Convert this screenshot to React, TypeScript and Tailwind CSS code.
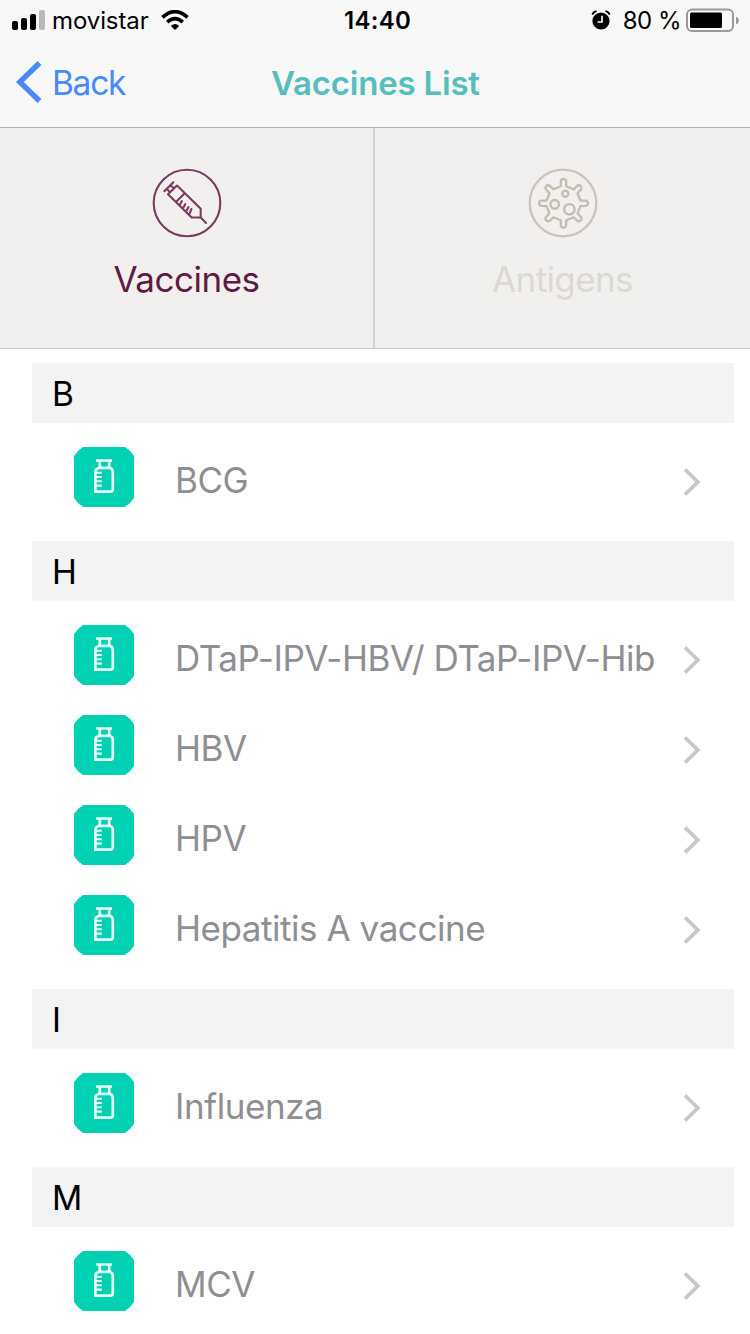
import React, { useState } from 'react';

interface Section {
  letter: string;
  items: string[];
}

const sections: Section[] = [
  { letter: 'B', items: ['BCG'] },
  { letter: 'H', items: ['DTaP-IPV-HBV/ DTaP-IPV-Hib', 'HBV', 'HPV', 'Hepatitis A vaccine'] },
  { letter: 'I', items: ['Influenza'] },
  { letter: 'M', items: ['MCV'] },
];

// Outline of the germ: eight rounded spikes around a round body
const germPath = () => {
  const point = (angle: number, along: number, side: number) => {
    const x = 35.5 + along * Math.cos(angle) - side * Math.sin(angle);
    const y = 35.3 + along * Math.sin(angle) + side * Math.cos(angle);
    return `${x.toFixed(2)} ${y.toFixed(2)}`;
  };
  let d = '';
  for (let i = 0; i < 8; i++) {
    const a = (i * Math.PI) / 4;
    d += `${i === 0 ? 'M' : 'L'}${point(a, 17, -2.8)} L${point(a, 22.4, -2.6)} `;
    d += `A2.7 2.7 0 0 1 ${point(a, 22.4, 2.6)} L${point(a, 17, 2.8)} `;
  }
  return d + 'Z';
};

const SyringeIcon = () => (
  <svg width="70" height="70" viewBox="0 0 70 70" fill="none" stroke="#7a3a61" strokeWidth="2.1" strokeLinecap="round" strokeLinejoin="round">
    <circle cx="35" cy="35" r="33.3" />
    <path d="M12.3 23.2 21.3 14.2M14.6 21 18 24M18.4 17.2 22 20.2" />
    <path d="M16 26.3 25 17.6 48.7 40.7V49.5H39.7ZM32 26 24.7 33.2M48.7 49.5 54 55" />
    <path d="M28 36.6 29.8 33.2M31.4 39.6 33.2 36.2M34.6 42.6 36.4 39.2M37.6 45.6 39.4 41" />
  </svg>
);

const GermIcon = () => (
  <svg width="70" height="70" viewBox="0 0 70 70" fill="none" stroke="#c4bbae" strokeWidth="2.3" strokeLinejoin="round">
    <circle cx="35" cy="35" r="33.3" stroke="#cbc3b8" />
    <path d={germPath()} />
    <circle cx="37.4" cy="25.7" r="3" />
    <circle cx="26.7" cy="36.3" r="4.3" />
    <circle cx="41.4" cy="41.3" r="5.2" />
  </svg>
);

const VialIcon = () => (
  <svg width="60" height="60" viewBox="0 0 60 60" fill="none" stroke="#e6fbf6" strokeWidth="2.7">
    <path d="M9 0H51Q56 3 60 9V51Q57 56 51 60H9Q3 56 0 51V9Q3 4 9 0Z" fill="#00d1b2" stroke="none" />
    <path d="M22 13.5H38M25.8 13.5V20.5M35.2 13.5V20.5M24 20.8H37" />
    <path d="M24 21.2Q21.4 22 21.4 25V44.6H36.5Q38.8 44.6 38.8 42.3V25Q38.8 22 36.5 21.2" />
    <path d="M21 25.8H27.8M21 30H27.8M21 34.3H27.8M21 38.6H27.8" strokeWidth="2.1" />
  </svg>
);

const StatusBar = () => (
  <div className="relative flex h-10 items-center justify-between pl-3 pr-[11px] text-black">
    <div className="flex items-center">
      <svg width="34" height="20" viewBox="0 0 34 20">
        <rect x="0" y="11" width="6" height="9" rx="2" />
        <rect x="9" y="8" width="6" height="12" rx="2" />
        <rect x="18" y="4" width="6" height="16" rx="2" />
        <rect x="27" y="0" width="6" height="20" rx="2" fill="#b9b9b9" />
      </svg>
      <span className="ml-[6px] pt-[2px] text-[24px] tracking-[-0.1px]">movistar</span>
      <svg className="ml-3" width="28" height="20" viewBox="0 0 28 20">
        <path d="M1.5 7.4Q14-4.2 26.5 7.4" fill="none" stroke="black" strokeWidth="3.6" />
        <path d="M6.2 12.2Q14 5.2 21.8 12.2" fill="none" stroke="black" strokeWidth="3.6" />
        <path d="M9.8 16Q14 12 18.2 16L14 20Z" />
      </svg>
    </div>
    <span className="absolute left-[344px] pt-[2px] text-[24px] font-semibold tracking-[0.3px]">14:40</span>
    <div className="flex items-center">
      <svg width="20" height="20" viewBox="0 0 20 20">
        <circle cx="10" cy="11" r="8.6" />
        <path d="M1.3 4.6Q2.5 1.6 5.6 1.2M18.7 4.6Q17.5 1.6 14.4 1.2" fill="none" stroke="black" strokeWidth="1.8" />
        <path d="M11 5.8V12H6.5" fill="none" stroke="#f8f8f8" strokeWidth="1.7" />
      </svg>
      <span className="ml-[12px] pt-[2px] text-[24px] tracking-[-0.5px]">80 %</span>
      <svg className="ml-[5px]" width="53" height="24" viewBox="0 0 53 24">
        <rect x="1" y="1.5" width="46" height="21.5" rx="5" fill="none" stroke="#999" strokeWidth="2" />
        <rect x="4" y="4.5" width="32" height="15.5" rx="1.5" />
        <path d="M50 8.5Q53 10 53 12.5T50 16.5Z" fill="#999" />
      </svg>
    </div>
  </div>
);

const App: React.FC = () => {
  const [tab, setTab] = useState('vaccines');

  return (
    <div className="flex h-[1334px] w-[750px] flex-col overflow-hidden bg-white font-['Inter',sans-serif]">
      <header className="h-32 shrink-0 border-b border-[#b2b2b2] bg-[#f8f8f8]">
        <StatusBar />
        <div className="relative flex h-[87px] items-center">
          <button type="button" className="flex items-center pb-1 pl-4 text-[#488aff]">
            <svg width="26" height="42" viewBox="0 0 26 42" fill="none" stroke="currentColor" strokeWidth="5.4">
              <path d="M23.5 2 3.8 21 23.5 40" />
            </svg>
            <span className="ml-[10px] pt-[3px] text-[33.5px] tracking-[-1.3px]">Back</span>
          </button>
          <h1 className="absolute left-[271px] whitespace-nowrap text-[33px] font-semibold tracking-[-0.2px] text-[#57bebe]">Vaccines List</h1>
        </div>
      </header>

      <nav className="flex h-[221px] shrink-0 border-b border-[#c8c7cc] bg-[#f2f0ee]">
        <button
          type="button"
          onClick={() => setTab('vaccines')}
          aria-pressed={tab === 'vaccines'}
          className="flex w-[375px] flex-col items-center border-r-2 border-[#d2d1cf] pt-10"
        >
          <SyringeIcon />
          <span className="mt-[14px] text-[35px] leading-[54px] tracking-[-0.5px] text-[#5f1a45]">Vaccines</span>
        </button>
        <button
          type="button"
          onClick={() => setTab('antigens')}
          aria-pressed={tab === 'antigens'}
          className="flex w-[375px] flex-col items-center pt-10"
        >
          <GermIcon />
          <span className="mt-[14px] text-[35px] leading-[54px] tracking-[-0.6px] text-[#dbd9d5]">Antigens</span>
        </button>
      </nav>

      <main className="pl-8 pr-4 pt-[14px]">
        {sections.map(section => (
          <section key={section.letter}>
            <h2 className="h-[60px] bg-[#f3f3f3] pl-5 text-[33.5px] leading-[62px] text-black">{section.letter}</h2>
            <ul className="py-[14px]">
              {section.items.map(item => (
                <li key={item} className="flex h-[90px] items-center pl-[42px] pr-[33px]">
                  <div className="pb-[10px]">
                    <VialIcon />
                  </div>
                  <span className="ml-[41px] flex-1 whitespace-nowrap pb-1 text-[35px] tracking-[-0.45px] text-[#8e8e93]">{item}</span>
                  <svg className="shrink-0" width="18" height="28" viewBox="0 0 18 28" fill="none" stroke="#c8c7cc" strokeWidth="3.8">
                    <path d="M2 1.5 14.8 14 2 26.5" />
                  </svg>
                </li>
              ))}
            </ul>
          </section>
        ))}
      </main>
    </div>
  );
};

export default App;
